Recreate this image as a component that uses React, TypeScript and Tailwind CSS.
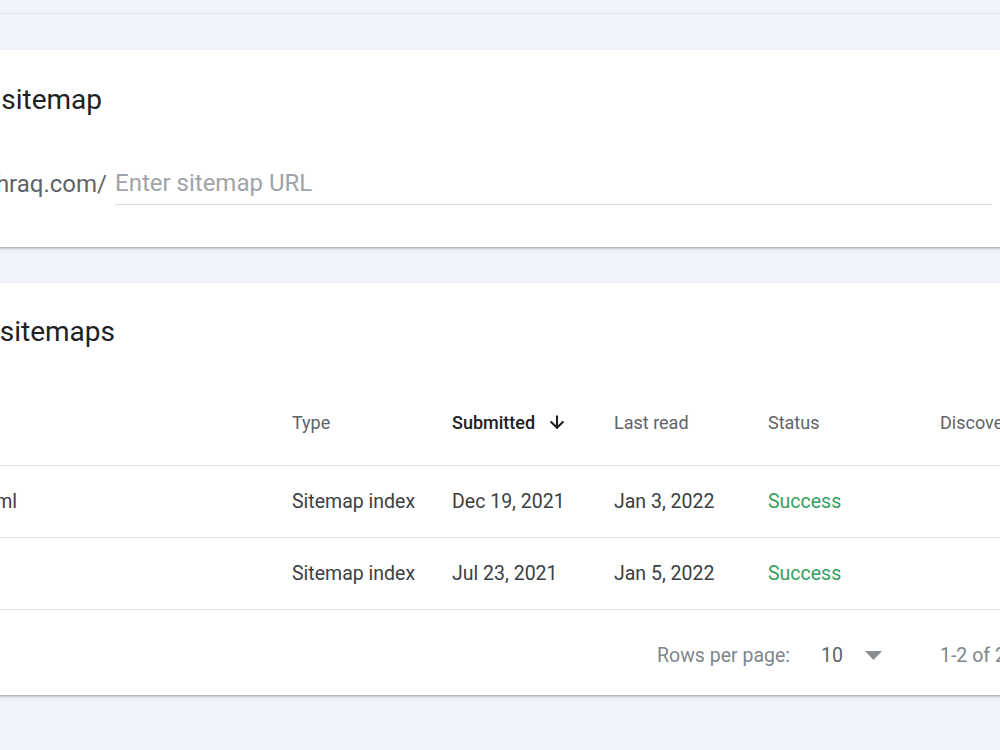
import { ArrowDown } from 'lucide-react';

const rows = [
    { path: '/sitemap_index.xml', type: 'Sitemap index', submitted: 'Dec 19, 2021', lastRead: 'Jan 3, 2022', status: 'Success' },
    { path: '/sitemap.xml', type: 'Sitemap index', submitted: 'Jul 23, 2021', lastRead: 'Jan 5, 2022', status: 'Success' },
];

export default function App() {
    return (
        <div className="w-[1000px] h-[750px] overflow-hidden bg-[#f1f4fb] font-['Roboto',sans-serif]">
            <div className="h-[14px] border-b border-[#e2e5eb]" />

            {/* Add a new sitemap */}
            <div className="mt-[36px] -mx-[40px] bg-white h-[197px] shadow-[0_1px_2px_rgba(60,64,67,0.35),0_2px_4px_rgba(60,64,67,0.15)]">
                <div className="pl-[40px] pt-[32px]">
                    <div className="-ml-[300px] w-[402px] text-right text-[28px] leading-[36px] text-[#202124]">Add a new sitemap</div>
                    <div className="mt-[49px] flex items-end">
                        <div className="-ml-[300px] w-[407px] text-right text-[24px] leading-[32px] text-[#5f6368] pb-[5px]">https://www.example-nhraq.com/</div>
                        <div className="ml-[8px] w-[877px] border-b border-[#dadce0] pb-[5px] text-[24px] leading-[32px] text-[#a0a4a8]">Enter sitemap URL</div>
                    </div>
                </div>
            </div>

            {/* Submitted sitemaps */}
            <div className="mt-[36px] -mx-[40px] bg-white h-[412px] shadow-[0_1px_2px_rgba(60,64,67,0.35),0_2px_4px_rgba(60,64,67,0.15)]">
                <div className="pl-[40px] pt-[31px]">
                    <div className="-ml-[300px] w-[415px] text-right text-[28px] leading-[36px] text-[#202124]">Submitted sitemaps</div>
                </div>
                <div className="mt-[29px] pl-[40px]">
                    <div className="flex items-center h-[87px] border-b border-[#e0e0e0] text-[18px] text-[#5f6368]">
                        <div className="w-[292px] shrink-0" />
                        <div className="w-[160px] shrink-0">Type</div>
                        <div className="w-[162px] shrink-0 flex items-center gap-[12px] text-[#202124] font-medium">
                            Submitted <ArrowDown size={20} strokeWidth={2.5} />
                        </div>
                        <div className="w-[154px] shrink-0">Last read</div>
                        <div className="w-[172px] shrink-0">Status</div>
                        <div className="shrink-0">Discovered URLs</div>
                    </div>
                    {rows.map((r, i) => (
                        <div key={i} className="flex items-center h-[72px] border-b border-[#e0e0e0] text-[19.5px] text-[#3c4043]">
                            <div className="w-[292px] shrink-0">
                                <div className={i === 0 ? '-ml-[200px] w-[217px] text-right' : '-ml-[200px] w-[180px] text-right'}>{r.path}</div>
                            </div>
                            <div className="w-[160px] shrink-0">{r.type}</div>
                            <div className="w-[162px] shrink-0">{r.submitted}</div>
                            <div className="w-[154px] shrink-0">{r.lastRead}</div>
                            <div className="w-[172px] shrink-0 text-[#37a060]">{r.status}</div>
                        </div>
                    ))}
                    <div className="flex items-center h-[86px] pt-[5px] text-[19.5px] text-[#80868b]">
                        <div className="w-[657px] shrink-0" />
                        <div className="w-[164px] shrink-0">Rows per page:</div>
                        <div className="w-[44px] shrink-0 text-[#5f6368]">10</div>
                        <svg width="17" height="9" viewBox="0 0 17 9" className="shrink-0">
                            <path d="M0 0 L17 0 L8.5 9 Z" fill="#8a8d91" />
                        </svg>
                        <div className="ml-[58px] shrink-0">1-2 of 2</div>
                    </div>
                </div>
            </div>
        </div>
    );
}
